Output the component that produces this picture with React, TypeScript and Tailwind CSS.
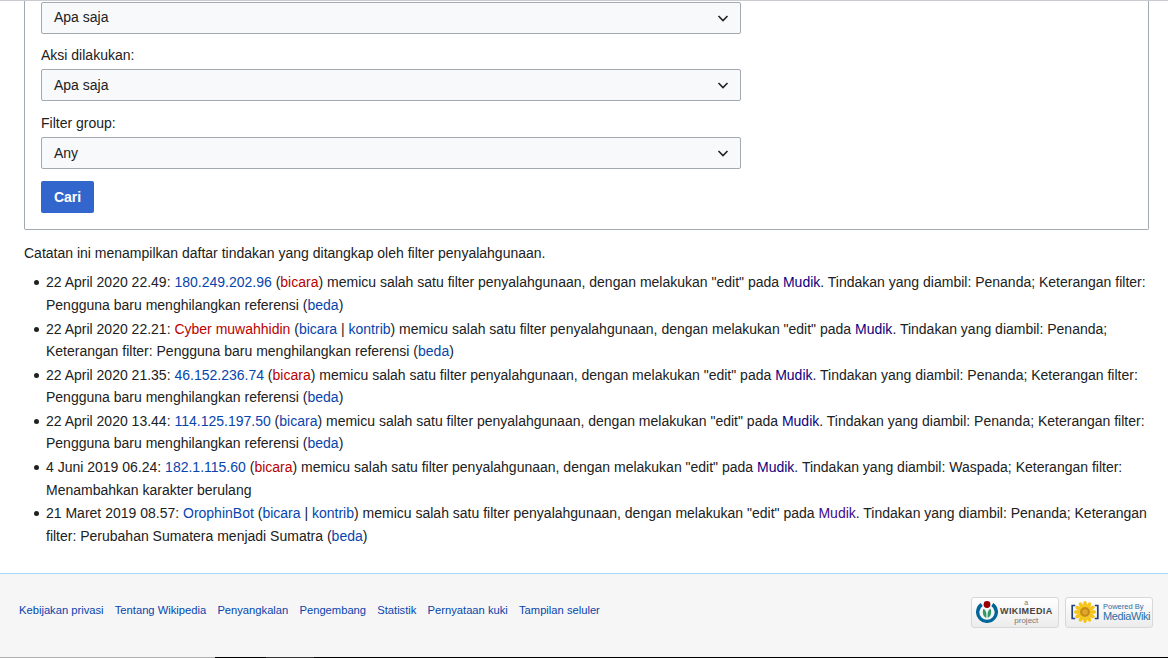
import React from 'react';

type LinkColor = 'blue' | 'red' | 'visited' | 'purple';
type Part = string | { t: string; c: LinkColor };

const linkColors: Record<LinkColor, string> = {
  blue: 'text-[#0645ad]',
  red: 'text-[#ba0000]',
  visited: 'text-[#0b0080]',
  purple: 'text-[#3d0a8a]',
};

const L = (t: string, c: LinkColor = 'blue'): Part => ({ t, c });

const filterText = ' memicu salah satu filter penyalahgunaan, dengan melakukan "edit" pada ';

const entries: Part[][] = [
  ['22 April 2020 22.49: ', L('180.249.202.96'), ' (', L('bicara', 'red'), ')', filterText, L('Mudik', 'visited'), '. Tindakan yang diambil: Penanda; Keterangan filter: Pengguna baru menghilangkan referensi (', L('beda'), ')'],
  ['22 April 2020 22.21: ', L('Cyber muwahhidin', 'red'), ' (', L('bicara'), ' | ', L('kontrib'), ')', filterText, L('Mudik', 'visited'), '. Tindakan yang diambil: Penanda; Keterangan filter: Pengguna baru menghilangkan referensi (', L('beda'), ')'],
  ['22 April 2020 21.35: ', L('46.152.236.74'), ' (', L('bicara', 'red'), ')', filterText, L('Mudik', 'visited'), '. Tindakan yang diambil: Penanda; Keterangan filter: Pengguna baru menghilangkan referensi (', L('beda'), ')'],
  ['22 April 2020 13.44: ', L('114.125.197.50'), ' (', L('bicara'), ')', filterText, L('Mudik', 'visited'), '. Tindakan yang diambil: Penanda; Keterangan filter: Pengguna baru menghilangkan referensi (', L('beda'), ')'],
  ['4 Juni 2019 06.24: ', L('182.1.115.60'), ' (', L('bicara', 'red'), ')', filterText, L('Mudik', 'visited'), '. Tindakan yang diambil: Waspada; Keterangan filter: Menambahkan karakter berulang'],
  ['21 Maret 2019 08.57: ', L('OrophinBot'), ' (', L('bicara'), ' | ', L('kontrib'), ')', filterText, L('Mudik', 'purple'), '. Tindakan yang diambil: Penanda; Keterangan filter: Perubahan Sumatera menjadi Sumatra (', L('beda'), ')'],
];

const footerLinks = ['Kebijakan privasi', 'Tentang Wikipedia', 'Penyangkalan', 'Pengembang', 'Statistik', 'Pernyataan kuki', 'Tampilan seluler'];

const petals = [0, 30, 60, 90, 120, 150, 180, 210, 240, 270, 300, 330];

const SelectBox: React.FC<{ value: string; raised?: boolean }> = ({ value, raised }) => (
  <div className="w-[700px] h-[32px] flex items-center justify-between pl-[12px] pr-[11px] bg-[#f8f9fa] border border-[#a2a9b1] rounded-[2px] text-[#202122]">
    <span className={raised ? 'mb-[2px]' : ''}>{value}</span>
    <svg width="12" height="12" viewBox="0 0 12 12" fill="none" stroke="#202122" strokeWidth="1.6">
      <path d="M1.5 4 L6 8.5 L10.5 4" />
    </svg>
  </div>
);

const WikimediaBadge = () => (
  <div className="w-[88px] h-[31px] flex items-center gap-[2px] pl-[4px] border border-[#d8d8d8] rounded-[3px] bg-linear-to-b from-white to-[#ececec]">
    <svg width="22" height="22" viewBox="0 0 22 22" className="shrink-0">
      <circle cx="11" cy="3.5" r="3.4" fill="#990000" />
      <path d="M4.7 2 A11 11 0 1 0 17.3 2 L15.3 5 A7.6 7.6 0 1 1 6.7 5 Z" fill="#006699" />
      <path d="M10.4 16.8 C7 16 6 11 7.5 7.8 C9 8.5 10.4 10.5 10.4 13 Z M11.6 16.8 C15 16 16 11 14.5 7.8 C13 8.5 11.6 10.5 11.6 13 Z" fill="#339966" />
    </svg>
    <div className="flex flex-col items-center text-[#777]">
      <span className="text-[7px] leading-[6px]">a</span>
      <span className="text-[9px] leading-[10px] font-bold text-[#444] tracking-[0.4px]">WIKIMEDIA</span>
      <span className="text-[8px] leading-[9px]">project</span>
    </div>
  </div>
);

const MediaWikiBadge = () => (
  <div className="w-[88px] h-[31px] flex items-center gap-[4px] pl-[5px] border border-[#d8d8d8] rounded-[3px] bg-linear-to-b from-white to-[#ececec]">
    <svg width="28" height="22" viewBox="0 0 28 22" className="shrink-0">
      <g fill="#f5c518">
        {petals.map((a) => (
          <ellipse key={a} cx="14" cy="3.4" rx="1.9" ry="3.4" transform={`rotate(${a} 14 11)`} />
        ))}
      </g>
      <circle cx="14" cy="11" r="5" fill="#c98a14" />
      <circle cx="14" cy="11" r="2.8" fill="#e0a82a" />
      <path d="M4.2 4.5 H1.2 V17.5 H4.2 M23.8 4.5 H26.8 V17.5 H23.8" fill="none" stroke="#1f3f7f" strokeWidth="1.7" />
    </svg>
    <div className="flex flex-col text-[#2a6fa8]">
      <span className="text-[7.5px] leading-[8px]">Powered By</span>
      <span className="text-[11px] leading-[11px] tracking-[-0.4px]">MediaWiki</span>
    </div>
  </div>
);

export default function App() {
  return (
    <div className="h-[658px] overflow-hidden flex flex-col bg-white text-[14px] text-[#202122] font-['Liberation_Sans',Arial,sans-serif]">
      <div className="h-px bg-[#c8ccd1] shrink-0" />
      <div className="h-[572px] shrink-0 pl-[24px] pr-[19px]">
        <div className="border border-t-0 border-[#a2a9b1] rounded-b-[2px] h-[229px] pt-px pl-[16px]">
          <SelectBox value="Apa saja" raised />
          <p className="mt-[10px] mb-[3px] h-[22px] leading-[22px]">Aksi dilakukan:</p>
          <SelectBox value="Apa saja" />
          <p className="mt-[11px] mb-[3px] h-[22px] leading-[22px]">Filter group:</p>
          <SelectBox value="Any" />
          <button className="mt-[12px] w-[53px] h-[32px] bg-[#3366cc] text-white font-bold rounded-[2px]">Cari</button>
        </div>
        <p className="mt-[12px] leading-[22.4px]">Catatan ini menampilkan daftar tindakan yang ditangkap oleh filter penyalahgunaan.</p>
        <ul className="mt-[7px] ml-[10px]">
          {entries.map((parts, i) => (
            <li key={i} className="flex leading-[22.4px] mb-[1.4px]">
              <span className="shrink-0 w-[5px] h-[5px] rounded-full bg-[#202122] mt-[9px] mr-[7px]" />
              <div>
                {parts.map((p, j) =>
                  typeof p === 'string' ? p : <a key={j} className={linkColors[p.c]}>{p.t}</a>
                )}
              </div>
            </li>
          ))}
        </ul>
      </div>
      <div className="h-[84px] shrink-0 border-t border-[#a7d7f9] bg-[#f6f6f6] flex items-center justify-between pl-[19px] pr-[15px]">
        <div className="flex gap-[11.2px] text-[11.2px] text-[#0645ad] mt-[-11px]">
          {footerLinks.map((f) => <a key={f}>{f}</a>)}
        </div>
        <div className="flex gap-[6px] mt-[-7px]">
          <WikimediaBadge />
          <MediaWikiBadge />
        </div>
      </div>
      <div className="h-[2px] shrink-0 flex">
        <div className="w-[215px] bg-[#b0b0b0]" />
        <div className="w-[51px] bg-black" />
        <div className="w-[48px] bg-[#333]" />
        <div className="flex-1 bg-black" />
      </div>
    </div>
  );
}
